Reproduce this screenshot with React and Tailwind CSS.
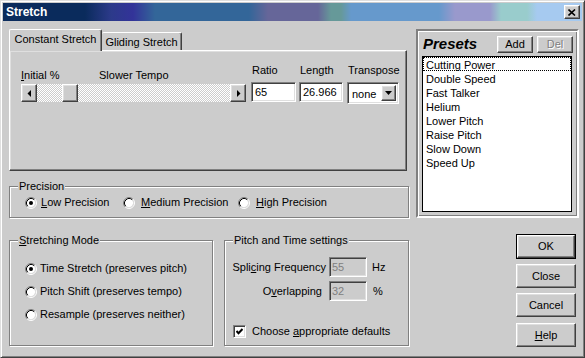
import React from "react";

// classic 3d edges
const raised = "border border-t-white border-l-white border-r-[#404040] border-b-[#404040] shadow-[inset_-1px_-1px_#808080,inset_1px_1px_#dfdfdf]";
const sunken = "border border-t-[#808080] border-l-[#808080] border-r-white border-b-white shadow-[inset_1px_1px_#404040,inset_-1px_-1px_#dfdfdf]";
const etched = "border border-[#808080] shadow-[inset_1px_1px_white,1px_1px_white]";

function Radio({ checked }) {
    return (
        <svg width="12" height="12" viewBox="0 0 12 12" className="shrink-0">
            <circle cx="6" cy="6" r="4.2" fill="white" />
            <path d="M2.11 9.89 A5.5 5.5 0 0 1 9.89 2.11" stroke="#808080" fill="none" />
            <path d="M9.89 2.11 A5.5 5.5 0 0 1 2.11 9.89" stroke="white" fill="none" />
            <path d="M2.82 9.18 A4.5 4.5 0 0 1 9.18 2.82" stroke="#000" fill="none" />
            <path d="M9.18 2.82 A4.5 4.5 0 0 1 2.82 9.18" stroke="#dfdfdf" fill="none" />
            {checked && <circle cx="6" cy="6" r="2" fill="#000" />}
        </svg>
    );
}

function Group({ label, className, children }) {
    return (
        <div className={`relative ${etched} ${className}`}>
            <span className="absolute -top-[7px] left-[8px] bg-[#cccccc] px-[1px] leading-[13px]">{label}</span>
            {children}
        </div>
    );
}

function Button({ children, className = "", disabled }) {
    return (
        <div className={`flex items-center justify-center bg-[#cccccc] ${raised} ${className} ${disabled ? "text-[#808080] [text-shadow:1px_1px_0_#fff]" : ""}`}>
            {children}
        </div>
    );
}

const presets = ["Cutting Power", "Double Speed", "Fast Talker", "Helium", "Lower Pitch", "Raise Pitch", "Slow Down", "Speed Up"];

export default function App() {
    return (
        <div className="w-[585px] h-[358px] bg-[#cccccc] font-['Liberation_Sans',Arial,sans-serif] text-[11px] text-black leading-[13px] border border-t-[#dfdfdf] border-l-[#dfdfdf] border-r-[#404040] border-b-[#404040] shadow-[inset_1px_1px_white,inset_-1px_-1px_#808080] p-[2px] flex flex-col overflow-hidden">
            {/* title bar */}
            <div className="h-[18px] shrink-0 flex items-center pl-[2px] pr-[2px] bg-[linear-gradient(90deg,#0a2b5c_0px,#0a2b5c_82px,#2c3a8a_108px,#333399_130px,#336699_152px,#336699_246px,#666699_265px,#666699_315px,#669999_328px,#669999_338px,#6699cc_348px,#6699cc_436px,#9999cc_452px,#9999cc_487px,#99cccc_498px,#99cccc_524px,#a6caf0_534px)]">
                <span className="text-white font-bold text-[12px] pl-px">Stretch</span>
                <div className={`ml-auto w-[16px] h-[14px] flex items-center justify-center bg-[#cccccc] ${raised}`}>
                    <svg width="8" height="7" viewBox="0 0 8 7">
                        <path d="M0.5 0.5 L7 6.5 M7 0.5 L0.5 6.5" stroke="#000" strokeWidth="1.6" />
                    </svg>
                </div>
            </div>

            {/* body */}
            <div className="flex-1 flex flex-col pl-[6px] pt-[8px]">
                <div className="flex gap-[7px]">
                    {/* left column */}
                    <div className="w-[400px] flex flex-col">
                        <div className="flex items-end h-[21px]">
                            <div className="relative z-10 -mb-px w-[93px] h-[22px] bg-[#cccccc] border-t border-l border-r border-t-white border-l-white border-r-[#404040] shadow-[inset_-1px_0_#808080] rounded-t-[2px] flex items-center justify-center pb-[2px]">
                                Constant Stretch
                            </div>
                            <div className="w-[80px] h-[18px] border-t border-r border-t-white border-r-[#404040] shadow-[inset_-1px_0_#808080] rounded-t-[2px] flex items-center justify-center pt-px">
                                Gliding Stretch
                            </div>
                        </div>
                        <div className={`w-[398px] h-[121px] ${raised} flex items-start pt-[13px] pl-[11px]`}>
                            {/* slider */}
                            <div className="w-[225px] mt-[5px] flex flex-col">
                                <div className="flex h-[13px]">
                                    <span className="w-[78px]"><span className="underline">I</span>nitial %</span>
                                    <span>Slower Tempo</span>
                                </div>
                                <div className="mt-[2px] h-[18px] flex bg-[repeating-conic-gradient(#ffffff_0_25%,#cccccc_0_50%)] bg-[length:2px_2px]">
                                    <Button className="w-[16px] h-[18px]">
                                        <svg width="5" height="7" viewBox="0 0 5 7"><polygon points="4,0 4,7 0.5,3.5" fill="#000" /></svg>
                                    </Button>
                                    <Button className="ml-[25px] w-[16px] h-[18px]" />
                                    <Button className="ml-auto w-[16px] h-[18px]">
                                        <svg width="5" height="7" viewBox="0 0 5 7"><polygon points="1,0 1,7 4.5,3.5" fill="#000" /></svg>
                                    </Button>
                                </div>
                            </div>
                            <div className="ml-[5px] w-[45px] flex flex-col">
                                <span className="h-[13px] pl-px">Ratio</span>
                                <div className={`mt-[5px] h-[20px] bg-white ${sunken} flex items-center pl-[3px]`}>65</div>
                            </div>
                            <div className="ml-[3px] w-[44px] flex flex-col">
                                <span className="h-[13px] pl-px">Length</span>
                                <div className={`mt-[5px] h-[20px] bg-white ${sunken} flex items-center pl-[3px]`}>26.966</div>
                            </div>
                            <div className="ml-[4px] w-[52px] flex flex-col">
                                <span className="h-[13px] pl-px">Transpose</span>
                                <div className={`mt-[5px] h-[22px] bg-white ${sunken} flex items-center p-[2px]`}>
                                    <span className="flex-1 pl-[2px] pt-[2px]">none</span>
                                    <Button className="w-[15px] h-[16px]">
                                        <svg width="7" height="4" viewBox="0 0 7 4"><polygon points="0,0 7,0 3.5,4" fill="#000" /></svg>
                                    </Button>
                                </div>
                            </div>
                        </div>
                        <Group label="Precision" className="mt-[15px] w-[400px] h-[32px] flex items-center pl-[15px] pt-px">
                            <div className="w-[98px] flex items-center gap-[4px]"><Radio checked /><span><span className="underline">L</span>ow Precision</span></div>
                            <div className="w-[115px] flex items-center gap-[6px]"><Radio /><span><span className="underline">M</span>edium Precision</span></div>
                            <div className="flex items-center gap-[6px]"><Radio /><span><span className="underline">H</span>igh Precision</span></div>
                        </Group>
                    </div>

                    {/* presets */}
                    <div className="w-[163px] h-[189px] border-2 border-t-[#808080] border-l-[#808080] border-r-white border-b-white shadow-[inset_1px_1px_white,inset_-1px_-1px_#808080] flex flex-col">
                        <div className="flex items-center h-[17px] mt-[5px] pl-[5px] pr-[4px]">
                            <span className="font-bold italic text-[15px] leading-[17px] -mt-[2px]">Presets</span>
                            <Button className="ml-auto w-[36px] h-[17px]">Add</Button>
                            <Button disabled className="ml-[4px] w-[36px] h-[17px]">Del</Button>
                        </div>
                        <div className="mt-[3px] ml-[4px] w-[150px] h-[156px] bg-white border border-black flex flex-col">
                            {presets.map((p, i) => (
                                <div key={p} className={`h-[14px] leading-[16px] pl-[3px] ${i === 0 ? "outline outline-1 outline-dotted outline-black -outline-offset-1" : ""}`}>
                                    {p}
                                </div>
                            ))}
                        </div>
                    </div>
                </div>

                {/* bottom row */}
                <div className="flex items-start mt-[16px]">
                    <Group label={<><span className="underline">S</span>tretching Mode</>} className="mt-[6px] w-[204px] h-[106px] flex flex-col pl-[15px] pt-[21px] gap-[10px]">
                        <div className="flex items-center gap-[3px]"><Radio checked /><span>Time Stretch (preserves pitch)</span></div>
                        <div className="flex items-center gap-[3px]"><Radio /><span>Pitch Shift (preserves tempo)</span></div>
                        <div className="flex items-center gap-[3px]"><Radio /><span>Resample (preserves neither)</span></div>
                    </Group>
                    <Group label="Pitch and Time settings" className="mt-[6px] ml-[11px] w-[185px] h-[106px] flex flex-col pt-[16px]">
                        <div className="flex items-center">
                            <span className="w-[101px] text-right">Spli<span className="underline">c</span>ing Frequency</span>
                            <div className={`ml-[3px] w-[38px] h-[20px] ${sunken} flex items-center pl-[2px] text-[#808080]`}>55</div>
                            <span className="ml-[5px]">Hz</span>
                        </div>
                        <div className="flex items-center mt-[4px]">
                            <span className="w-[101px] text-right pr-[4px]">O<span className="underline">v</span>erlapping</span>
                            <div className={`ml-[3px] w-[38px] h-[20px] ${sunken} flex items-center pl-[2px] text-[#808080]`}>32</div>
                            <span className="ml-[6px]">%</span>
                        </div>
                        <div className="flex items-center mt-[24px] pl-[8px] gap-[6px]">
                            <div className={`w-[13px] h-[13px] bg-white ${sunken} flex items-center justify-center`}>
                                <svg width="7" height="7" viewBox="0 0 7 7"><polyline points="0.5,3 2.5,5.2 6.5,1" fill="none" stroke="#000" strokeWidth="2" /></svg>
                            </div>
                            <span>Choose <span className="underline">a</span>ppropriate defaults</span>
                        </div>
                    </Group>
                    <div className="ml-[107px] w-[60px] flex flex-col">
                        <div className="h-[25px] border border-black">
                            <Button className="h-full">OK</Button>
                        </div>
                        <Button className="mt-[5px] h-[24px]">Close</Button>
                        <Button className="mt-[5px] h-[24px]">Cancel</Button>
                        <Button className="mt-[6px] h-[24px]"><span><span className="underline">H</span>elp</span></Button>
                    </div>
                </div>
            </div>
        </div>
    );
}
